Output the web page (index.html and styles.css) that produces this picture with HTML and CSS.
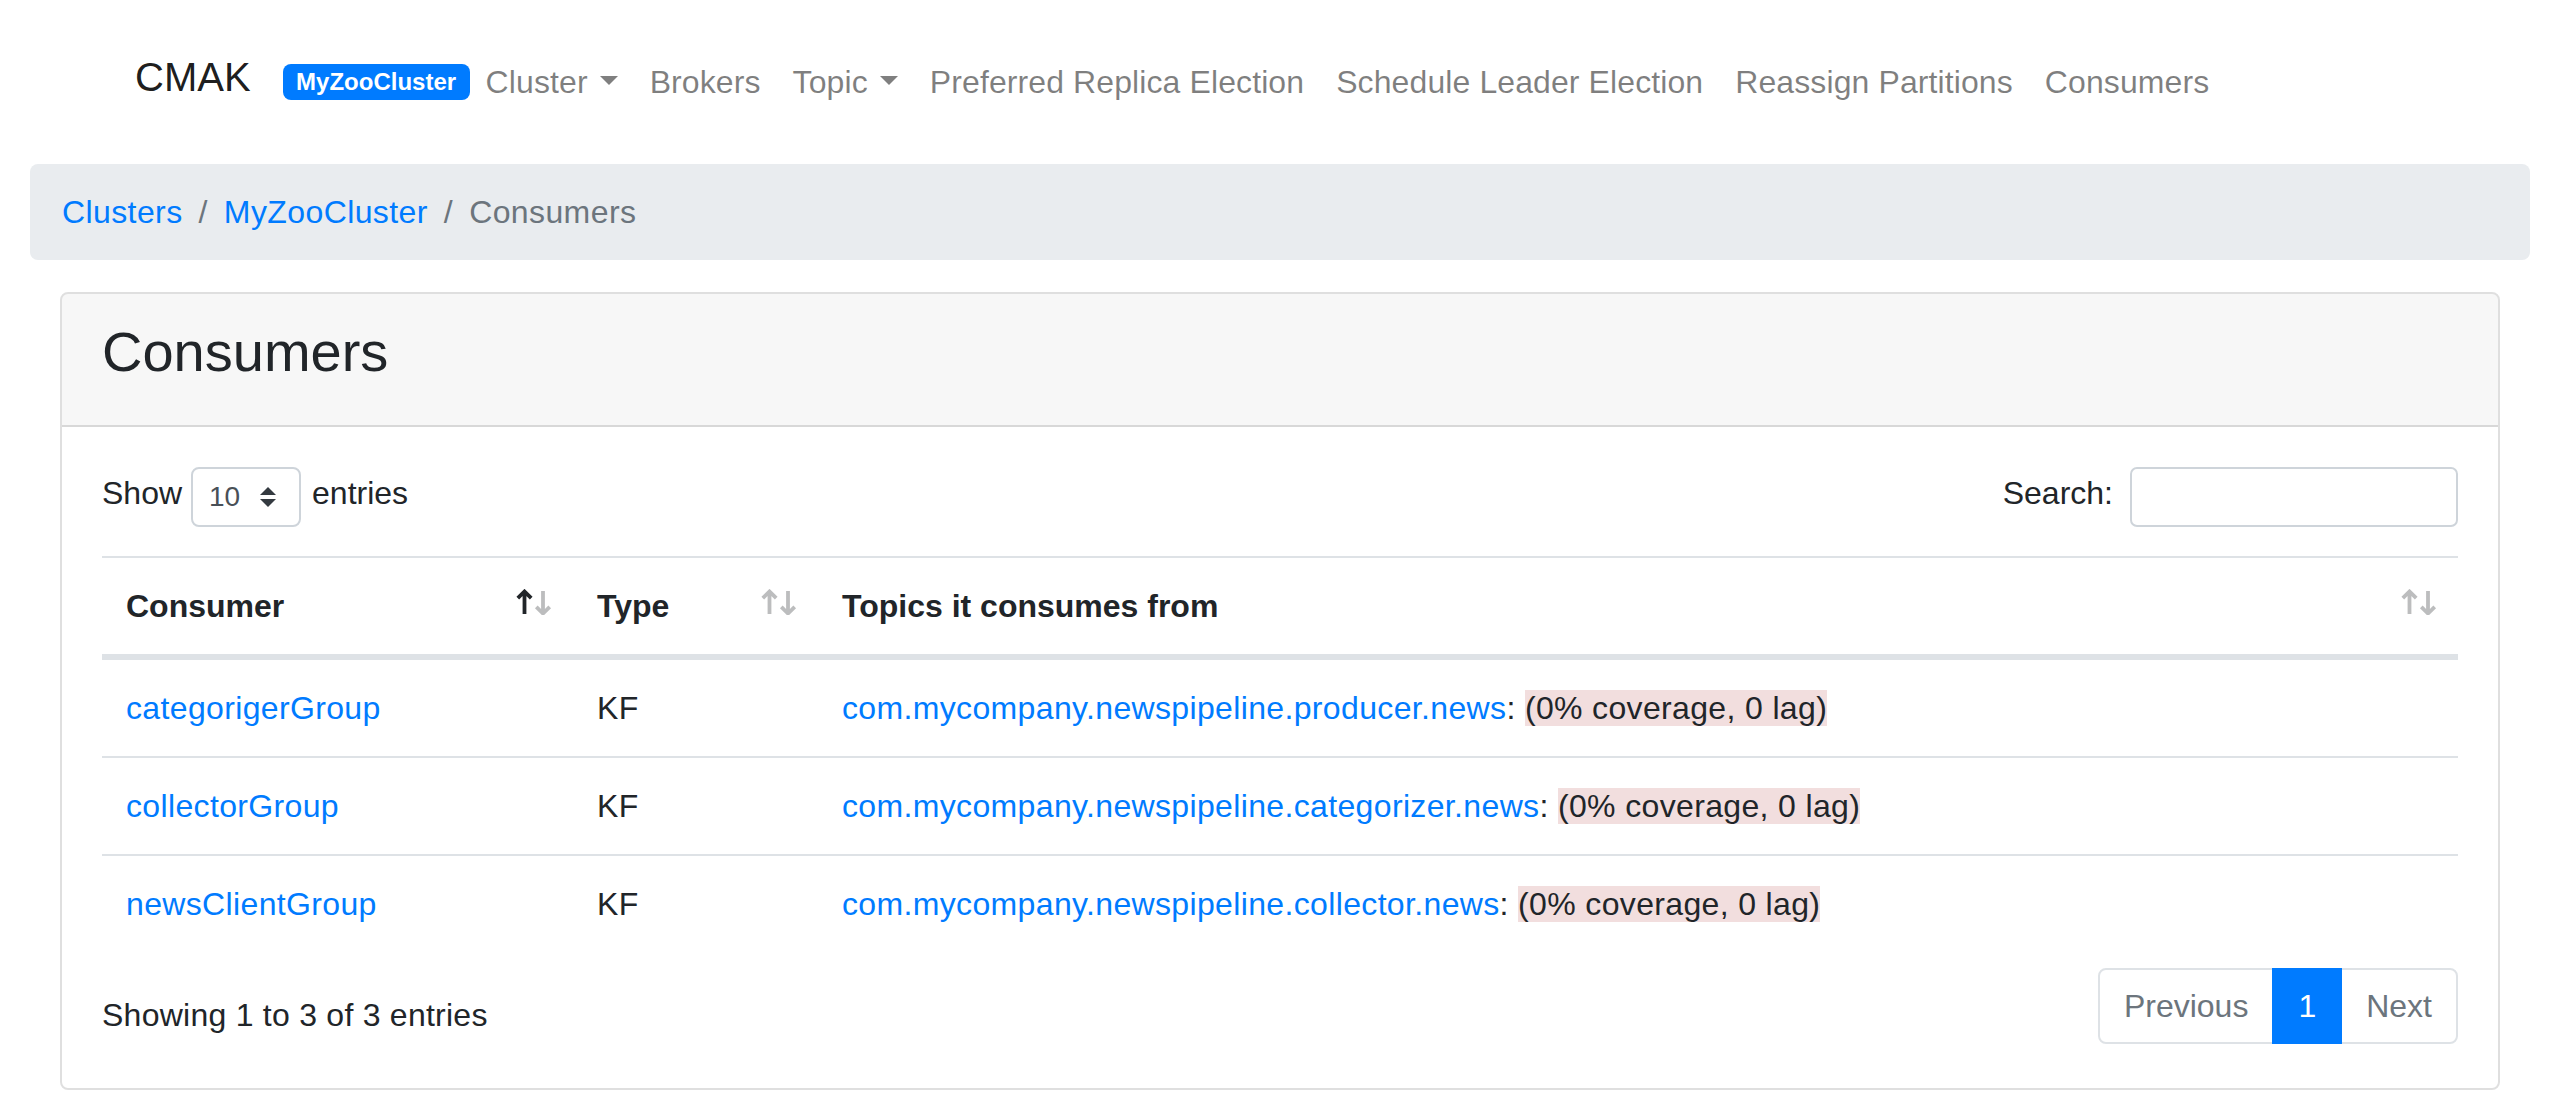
FILE: index.html
```html
<!DOCTYPE html>
<html lang="en">
<head>
<meta charset="utf-8">
<title>CMAK - Consumers</title>
<link rel="stylesheet" href="styles.css">
</head>
<body>
<header class="navbar">
  <a class="brand" href="#">CMAK</a>
  <span class="badge">MyZooCluster</span>
  <ul class="nav">
    <li><a class="nav-link dropdown" href="#">Cluster</a></li>
    <li><a class="nav-link" href="#">Brokers</a></li>
    <li><a class="nav-link dropdown" href="#">Topic</a></li>
    <li><a class="nav-link" href="#">Preferred Replica Election</a></li>
    <li><a class="nav-link" href="#">Schedule Leader Election</a></li>
    <li><a class="nav-link" href="#">Reassign Partitions</a></li>
    <li><a class="nav-link" href="#">Consumers</a></li>
  </ul>
</header>

<main class="main">
  <ol class="breadcrumb">
    <li class="crumb"><a href="#">Clusters</a></li>
    <li class="crumb"><a href="#">MyZooCluster</a></li>
    <li class="crumb active">Consumers</li>
  </ol>

  <section class="card">
    <div class="card-header">
      <h3 class="card-title">Consumers</h3>
    </div>
    <div class="card-body">
      <div class="toolbar">
        <label class="length">
          <span class="lbl">Show</span>
          <span class="select">
            <span>10</span>
            <svg class="select-arrow" viewBox="0 0 4 5" width="16" height="20"><path fill="#343a40" d="M2 0L0 2h4zm0 5L0 3h4z"/></svg>
          </span>
          <span class="lbl">entries</span>
        </label>
        <label class="filter">
          <span class="lbl">Search:</span>
          <input class="search" type="search">
        </label>
      </div>

      <table class="table">
        <thead>
          <tr>
            <th class="col-consumer">
              <div class="th-inner">
                <span>Consumer</span>
                <svg class="sort" viewBox="0 0 37 26" width="37" height="26">
                  <g fill="none" stroke-width="3.8" stroke-linejoin="miter">
                    <path class="up active" d="M8.5 2.5V25M1.8 9.2L8.5 2.5L15.2 9.2"/>
                    <path class="down" d="M27 2V24.5M20.3 17.8L27 24.5L33.7 17.8"/>
                  </g>
                </svg>
              </div>
            </th>
            <th class="col-type">
              <div class="th-inner">
                <span>Type</span>
                <svg class="sort" viewBox="0 0 37 26" width="37" height="26">
                  <g fill="none" stroke-width="3.8" stroke-linejoin="miter">
                    <path class="up" d="M8.5 2.5V25M1.8 9.2L8.5 2.5L15.2 9.2"/>
                    <path class="down" d="M27 2V24.5M20.3 17.8L27 24.5L33.7 17.8"/>
                  </g>
                </svg>
              </div>
            </th>
            <th class="col-topics">
              <div class="th-inner">
                <span>Topics it consumes from</span>
                <svg class="sort" viewBox="0 0 37 26" width="37" height="26">
                  <g fill="none" stroke-width="3.8" stroke-linejoin="miter">
                    <path class="up" d="M8.5 2.5V25M1.8 9.2L8.5 2.5L15.2 9.2"/>
                    <path class="down" d="M27 2V24.5M20.3 17.8L27 24.5L33.7 17.8"/>
                  </g>
                </svg>
              </div>
            </th>
          </tr>
        </thead>
        <tbody>
          <tr>
            <td><a href="#">categorigerGroup</a></td>
            <td>KF</td>
            <td><a href="#">com.mycompany.newspipeline.producer.news</a>: <span class="lag">(0% coverage, 0 lag)</span></td>
          </tr>
          <tr>
            <td><a href="#">collectorGroup</a></td>
            <td>KF</td>
            <td><a href="#">com.mycompany.newspipeline.categorizer.news</a>: <span class="lag">(0% coverage, 0 lag)</span></td>
          </tr>
          <tr>
            <td><a href="#">newsClientGroup</a></td>
            <td>KF</td>
            <td><a href="#">com.mycompany.newspipeline.collector.news</a>: <span class="lag">(0% coverage, 0 lag)</span></td>
          </tr>
        </tbody>
      </table>

      <div class="table-footer">
        <div class="info">Showing 1 to 3 of 3 entries</div>
        <ul class="pagination">
          <li class="page-item disabled"><a class="page-link" href="#">Previous</a></li>
          <li class="page-item active"><a class="page-link" href="#">1</a></li>
          <li class="page-item disabled"><a class="page-link" href="#">Next</a></li>
        </ul>
      </div>
    </div>
  </section>
</main>
</body>
</html>
```

FILE: styles.css
```css
html, body {
  margin: 0;
  padding: 0;
}

body {
  font-family: "Liberation Sans", Arial, sans-serif;
  font-size: 32px;
  line-height: 1.5;
  color: #212529;
  background: #fff;
}

a {
  color: #007bff;
  text-decoration: none;
}

/* ---------- Navbar ---------- */
.navbar {
  display: flex;
  align-items: center;
  padding: 42px 0 42px 135px;
}

.brand {
  font-size: 40px;
  line-height: 60px;
  padding: 5px 0 15px;
  margin-right: 32px;
  color: rgba(0, 0, 0, 0.9);
}

.badge {
  display: inline-block;
  background: #007bff;
  color: #fff;
  font-size: 24px;
  font-weight: 700;
  line-height: 1;
  padding: 6px 13.5px;
  border-radius: 8px;
}

.nav {
  display: flex;
  list-style: none;
  margin: 0;
  padding: 0;
}

.nav-link {
  display: block;
  padding: 16px;
  line-height: 48px;
  color: rgba(0, 0, 0, 0.5);
  letter-spacing: 0.1px;
}

.dropdown::after {
  content: "";
  display: inline-block;
  margin-left: 12px;
  vertical-align: 8.2px;
  border-top: 9.6px solid;
  border-right: 9.6px solid transparent;
  border-left: 9.6px solid transparent;
  border-bottom: 0;
}

/* ---------- Main ---------- */
.main {
  padding: 0 30px;
}

.breadcrumb {
  display: flex;
  list-style: none;
  margin: 0 0 32px;
  padding: 24px 32px;
  background: #e9ecef;
  border-radius: 8px;
  letter-spacing: 0.4px;
}

.crumb + .crumb {
  padding-left: 16px;
}

.crumb + .crumb::before {
  content: "/";
  padding-right: 16px;
  color: #6c757d;
}

.crumb.active {
  color: #6c757d;
}

/* ---------- Card ---------- */
.card {
  margin: 0 30px;
  border: 2px solid rgba(0, 0, 0, 0.125);
  border-radius: 8px;
}

.card-header {
  background: rgba(0, 0, 0, 0.03);
  padding: 24px 40px;
  border-bottom: 2px solid rgba(0, 0, 0, 0.125);
  border-radius: 6px 6px 0 0;
}

.card-title {
  margin: 0 0 16px;
  font-size: 56px;
  font-weight: 500;
  line-height: 1.2;
}

.card-body {
  padding: 40px;
}

/* ---------- Toolbar ---------- */
.toolbar {
  display: flex;
  justify-content: space-between;
  align-items: flex-start;
  height: 77px;
}

.length,
.filter {
  display: flex;
  align-items: center;
  height: 60px;
}

.lbl {
  margin-bottom: 8px;
}

.select {
  display: flex;
  align-items: center;
  justify-content: space-between;
  box-sizing: border-box;
  width: 110px;
  height: 60px;
  margin: 0 11px 0 9px;
  padding: 0 23px 0 16px;
  border: 2px solid #ced4da;
  border-radius: 8px;
  font-size: 28px;
  color: #495057;
}

.select-arrow {
  display: block;
}

.search {
  box-sizing: border-box;
  width: 328px;
  height: 60px;
  margin: 0 0 0 17px;
  padding: 0 16px;
  border: 2px solid #ced4da;
  border-radius: 7px;
  font-family: inherit;
  font-size: 28px;
  background: #fff;
  outline: none;
}

/* ---------- Table ---------- */
.table {
  width: 100%;
  border-collapse: separate;
  border-spacing: 0;
  margin: 12px 0;
}

.table th {
  padding: 24px 20px 24px 24px;
  text-align: left;
  font-weight: 700;
  vertical-align: bottom;
  border-top: 2px solid #dee2e6;
  border-bottom: 4px solid #dee2e6;
}

.col-consumer { width: 471px; box-sizing: border-box; }
.col-type { width: 245px; box-sizing: border-box; }

.th-inner {
  display: flex;
  justify-content: space-between;
  align-items: flex-start;
}

.sort {
  display: block;
  margin-top: 7px;
  flex: none;
}

.sort path {
  stroke: #212529;
  opacity: 0.3;
}

.sort path.active {
  opacity: 1;
}

.table td {
  padding: 24px;
  border-top: 2px solid #dee2e6;
  vertical-align: top;
  letter-spacing: 0.35px;
}

.lag {
  background: #f2dede;
}

/* ---------- Footer ---------- */
.table-footer {
  display: flex;
  justify-content: space-between;
  align-items: flex-start;
}

.info {
  padding-top: 27.2px;
  letter-spacing: 0.25px;
}

.pagination {
  display: flex;
  list-style: none;
  margin: 4px 0;
  padding: 0;
}

.page-link {
  display: block;
  padding: 16px 24px;
  line-height: 40px;
  border: 2px solid #dee2e6;
  background: #fff;
  color: #6c757d;
  margin-left: -2px;
}

.page-item:first-child .page-link {
  margin-left: 0;
  border-radius: 8px 0 0 8px;
}

.page-item:last-child .page-link {
  border-radius: 0 8px 8px 0;
}

.page-item.active .page-link {
  position: relative;
  background: #007bff;
  border-color: #007bff;
  color: #fff;
}
```
